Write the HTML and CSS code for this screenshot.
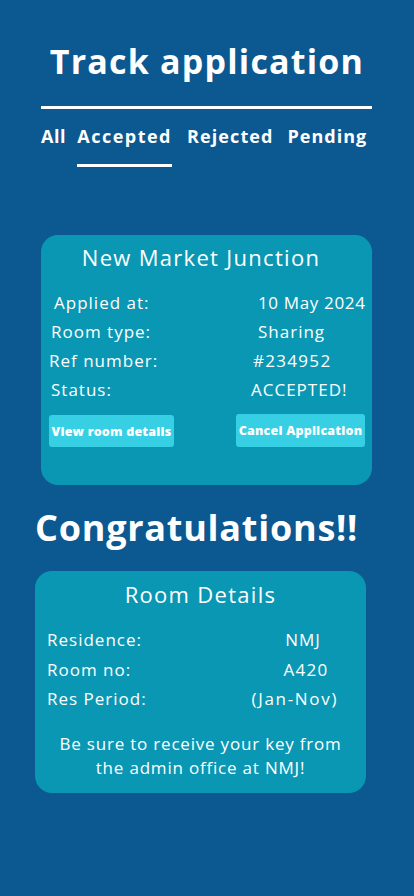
FILE: index.html
```html
<!DOCTYPE html>
<html lang="en">
<head>
<meta charset="utf-8">
<title>Track application</title>
<link rel="stylesheet" href="styles.css">
</head>
<body>
<main class="page">
  <h1 class="title">Track application</h1>
  <div class="rule"></div>
  <nav class="tabs">
    <span class="tab tab-all">All</span>
    <span class="tab tab-active">Accepted</span>
    <span class="tab tab-rejected">Rejected</span>
    <span class="tab tab-pending">Pending</span>
  </nav>

  <section class="card card-app">
    <h2 class="card-title">New Market Junction</h2>
    <div class="rows">
      <div class="row"><span class="label l1">Applied at:</span><span class="value v1">10 May 2024</span></div>
      <div class="row"><span class="label l2">Room type:</span><span class="value">Sharing</span></div>
      <div class="row"><span class="label l3">Ref number:</span><span class="value v3">#234952</span></div>
      <div class="row"><span class="label l4">Status:</span><span class="value">ACCEPTED!</span></div>
    </div>
    <div class="actions">
      <button class="btn btn-view">View room details</button>
      <button class="btn btn-cancel">Cancel Application</button>
    </div>
  </section>

  <h2 class="congrats">Congratulations!!</h2>

  <section class="card card-room">
    <h2 class="card-title">Room Details</h2>
    <div class="details">
      <div class="drow"><span class="dlabel">Residence:</span><span class="dvalue">NMJ</span></div>
      <div class="drow"><span class="dlabel">Room no:</span><span class="dvalue dvalue-room">A420</span></div>
      <div class="drow"><span class="dlabel">Res Period:</span><span class="dvalue dvalue-wide">(Jan-Nov)</span></div>
    </div>
    <p class="note">Be sure to receive your key from<br>the admin office at NMJ!</p>
  </section>
</main>
</body>
</html>
```

FILE: styles.css
```css
* { box-sizing: border-box; }

html, body {
  margin: 0;
  padding: 0;
  background: #0c5890;
}

body {
  font-family: "Open Sans", "Noto Sans", sans-serif;
  color: #ffffff;
  width: 414px;
  min-height: 896px;
}

.page {
  display: flex;
  flex-direction: column;
  padding-top: 38px;
}

.title {
  margin: 0;
  text-align: center;
  font-size: 34px;
  font-weight: 700;
  line-height: 46px;
  letter-spacing: 1.2px;
}

.rule {
  margin: 22px 42px 0 41px;
  height: 3px;
  background: #ffffff;
}

.tabs {
  display: flex;
  margin: 14px 0 0 41px;
}

.tab {
  font-size: 18px;
  font-weight: 700;
  line-height: 26px;
  letter-spacing: 1.3px;
  padding-bottom: 15px;
  border-bottom: 3px solid transparent;
  margin-right: 14px;
}

.tab-all {
  letter-spacing: 0.6px;
  margin-right: 11px;
}

.tab-active {
  border-bottom-color: #ffffff;
  letter-spacing: 1.5px;
  margin-right: 15px;
}

.tab-rejected {
  letter-spacing: 1.1px;
  margin-right: 14px;
}

.tab-pending {
  letter-spacing: 1px;
}

.card {
  background: #0a97b3;
  border-radius: 17px;
}

.card-app {
  margin: 68px 42px 0 41px;
  height: 250px;
  padding-top: 7px;
}

.card-title {
  margin: 0;
  font-size: 22px;
  font-weight: 400;
  line-height: 30px;
  letter-spacing: 1.3px;
  text-align: center;
}

.card-app .card-title {
  padding-right: 11px;
}

.rows {
  display: flex;
  flex-direction: column;
  margin-top: 16px;
}

.row {
  display: flex;
  font-size: 17px;
  line-height: 29px;
  height: 29px;
  letter-spacing: 1px;
}

.v1 { letter-spacing: 0.65px; }
.v3 { letter-spacing: 1.3px; }

.l1 { padding-left: 13px; width: 217px; }
.l2 { padding-left: 10px; width: 217px; }
.l3 { padding-left: 8px; width: 212px; }
.l4 { padding-left: 10px; width: 210px; }

.actions {
  display: flex;
  justify-content: space-between;
  margin: 11px 7px 0 8px;
}

.btn {
  border: none;
  background: #36cfe4;
  color: #ffffff;
  font-family: "Open Sans", "Noto Sans", sans-serif;
  font-weight: 800;
  font-size: 12.5px;
  letter-spacing: 0.2px;
  border-radius: 3px;
  height: 32px;
  padding: 0;
  white-space: nowrap;
}

.btn-view { width: 125px; }
.btn-cancel { width: 129px; height: 33px; margin-top: -1px; }

.congrats {
  margin: 23px 0 0 35px;
  font-size: 36px;
  line-height: 40px;
  font-weight: 700;
  letter-spacing: 0.75px;
}

.card-room {
  margin: 23px 48px 0 35px;
  height: 222px;
  padding-top: 8px;
}

.details {
  display: flex;
  flex-direction: column;
  margin-top: 16px;
}

.drow {
  display: flex;
  font-size: 17px;
  line-height: 29.5px;
  letter-spacing: 1px;
  padding-left: 12px;
}

.dlabel { width: 205px; }
.dvalue { width: 130px; text-align: center; padding-right: 2px; }
.dvalue-room { padding-right: 0; padding-left: 4px; letter-spacing: 1.3px; }
.dvalue-wide { padding-right: 18px; letter-spacing: 1.7px; }

.note {
  margin: 18px 0 0 0;
  text-align: center;
  font-size: 17px;
  line-height: 24px;
  letter-spacing: 0.8px;
}
```
